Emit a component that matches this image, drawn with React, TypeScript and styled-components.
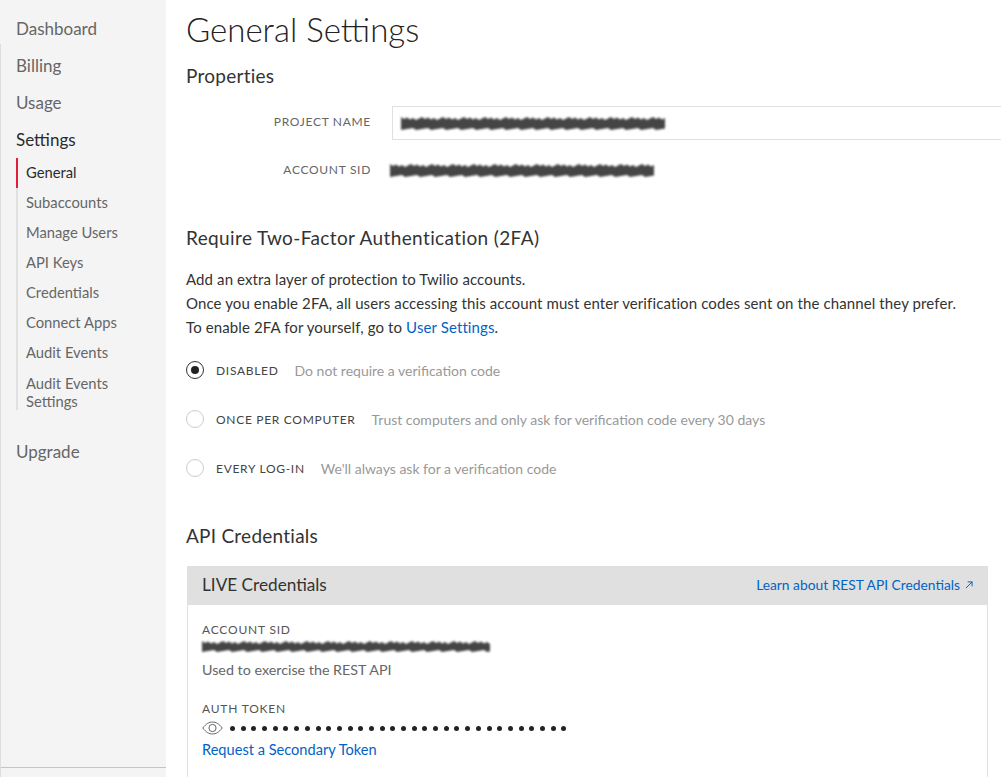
import React from 'react';
import styled, { createGlobalStyle } from 'styled-components';

const GlobalStyle = createGlobalStyle`
  html, body {
    margin: 0;
    height: 100%;
    overflow: hidden;
    background: #fff;
  }
  body {
    font-family: Lato, "Open Sans", sans-serif;
    color: #3a3a3a;
  }
`;

const navItems = ['Dashboard', 'Billing', 'Usage'];
const subItems = ['General', 'Subaccounts', 'Manage Users', 'API Keys', 'Credentials', 'Connect Apps', 'Audit Events'];

const radios = [
  { label: 'Disabled', hint: 'Do not require a verification code', checked: true },
  { label: 'Once per computer', hint: 'Trust computers and only ask for verification code every 30 days', checked: false },
  { label: 'Every log-in', hint: "We'll always ask for a verification code", checked: false },
];

// jagged blot used for the blacked out values
const Scribble = ({ width, height = 15 }: { width: number; height?: number }) => {
  let top = '';
  let bottom = '';
  for (let x = 0; x <= width; x += 3) {
    const a = 1 + ((x * 13) % 7) / 2;
    const b = height - 1 - ((x * 17) % 5) / 2;
    top += `L${x} ${a} `;
    bottom = `L${x} ${b} ` + bottom;
  }
  return (
    <ScribbleSvg width={width} height={height} viewBox={`0 0 ${width} ${height}`}>
      <path d={`M0 ${height / 2} ${top}${bottom}Z`} fill="#454545" />
    </ScribbleSvg>
  );
};

const App = () => (
  <Page>
    <GlobalStyle />
    <Sidebar>
      <Nav>
        {navItems.map((item) => (
          <NavItem key={item}>{item}</NavItem>
        ))}
        <NavItem $active>Settings</NavItem>
      </Nav>
      <SubNav>
        {subItems.map((item, i) => (
          <SubItem key={item} $active={i === 0}>
            {item}
          </SubItem>
        ))}
        <SubItem $wrap>
          Audit Events
          <br />
          Settings
        </SubItem>
      </SubNav>
      <Upgrade>Upgrade</Upgrade>
      <SidebarFooter />
    </Sidebar>

    <Main>
      <Title>General Settings</Title>
      <Heading>Properties</Heading>
      <FormRow>
        <FieldLabel>Project name</FieldLabel>
        <TextField>
          <Scribble width={266} />
        </TextField>
      </FormRow>
      <FormRow $plain>
        <FieldLabel $plain>Account SID</FieldLabel>
        <Scribble width={266} />
      </FormRow>

      <TwoFactorHeading>Require Two-Factor Authentication (2FA)</TwoFactorHeading>
      <Paragraph>
        Add an extra layer of protection to Twilio accounts.
        <br />
        Once you enable 2FA, all users accessing this account must enter verification codes sent on the channel they prefer.
        <br />
        To enable 2FA for yourself, go to <TextLink>User Settings</TextLink>.
      </Paragraph>

      <RadioList>
        {radios.map((r) => (
          <RadioRow key={r.label}>
            <RadioDot $checked={r.checked} />
            <RadioLabel>{r.label}</RadioLabel>
            <RadioHint>{r.hint}</RadioHint>
          </RadioRow>
        ))}
      </RadioList>

      <CredentialsHeading>API Credentials</CredentialsHeading>
      <Card>
        <CardHeader>
          <CardTitle>LIVE Credentials</CardTitle>
          <HeaderLink>
            Learn about REST API Credentials
            <svg width="8" height="8" viewBox="0 0 9 9" fill="none" stroke="#0263c4" strokeWidth="1.1">
              <path d="M1 8 8 1M3 1h5v5" />
            </svg>
          </HeaderLink>
        </CardHeader>
        <CardBody>
          <SmallLabel>Account SID</SmallLabel>
          <CardScribble>
            <Scribble width={288} height={13} />
          </CardScribble>
          <Hint>Used to exercise the REST API</Hint>
          <TokenLabel>Auth token</TokenLabel>
          <TokenRow>
            <svg width="21" height="14" viewBox="0 0 21 14" fill="none" stroke="#666" strokeWidth="1">
              <path d="M.8 7C4 2.8 7 1 10.5 1s6.5 1.8 9.7 6c-3.2 4.2-6.2 6-9.7 6S4 11.2.8 7Z" />
              <circle cx="10.5" cy="7" r="3.6" />
            </svg>
            <Dots>
              {Array.from({ length: 32 }).map((_, i) => (
                <Dot key={i} />
              ))}
            </Dots>
          </TokenRow>
          <SecondaryLink>Request a Secondary Token</SecondaryLink>
        </CardBody>
      </Card>
    </Main>
  </Page>
);

export default App;

const Page = styled.div`
  display: flex;
  height: 100vh;
  overflow: hidden;
`;

const Sidebar = styled.aside`
  position: relative;
  flex: 0 0 166px;
  box-sizing: border-box;
  padding-top: 10px;
  background: #f4f4f4;

  &::before {
    content: '';
    position: absolute;
    top: 44px;
    bottom: 0;
    left: 0;
    border-left: 1px solid #dedede;
  }
`;

const Nav = styled.nav`
  display: flex;
  flex-direction: column;
`;

const NavItem = styled.div<{ $active?: boolean }>`
  height: 37px;
  padding-left: 16px;
  font-size: 17px;
  line-height: 37px;
  color: ${({ $active }) => ($active ? '#2b2b2b' : '#666')};
`;

const SubNav = styled.div`
  display: flex;
  flex-direction: column;
  margin-left: 16px;
  border-left: 2px solid #e0e0e0;
`;

const SubItem = styled.div<{ $active?: boolean; $wrap?: boolean }>`
  box-sizing: border-box;
  height: ${({ $wrap }) => ($wrap ? 'auto' : '30px')};
  margin-left: -2px;
  padding: ${({ $wrap }) => ($wrap ? '6px 0 0 8px' : '0 0 0 8px')};
  border-left: 2px solid ${({ $active }) => ($active ? '#e31e3a' : 'transparent')};
  font-size: 14.75px;
  line-height: ${({ $wrap }) => ($wrap ? '18px' : '28px')};
  color: ${({ $active }) => ($active ? '#2b2b2b' : '#666')};
`;

const Upgrade = styled.div`
  margin-top: 30px;
  padding-left: 16px;
  font-size: 17px;
  line-height: 24px;
  color: #666;
`;

const SidebarFooter = styled.div`
  position: absolute;
  left: 1px;
  right: 0;
  bottom: 9px;
  border-top: 1px solid #c4c4c4;
`;

const Main = styled.main`
  flex: 1;
  min-width: 0;
  padding: 9px 0 0 20px;
`;

const Title = styled.h1`
  margin: 0;
  font-size: 33px;
  font-weight: 300;
  line-height: 40px;
  color: #222;
`;

const Heading = styled.h2`
  margin: 15px 0 0;
  font-size: 19px;
  font-weight: 400;
  letter-spacing: 0.25px;
  line-height: 24px;
  color: #333;
`;

const TwoFactorHeading = styled(Heading)`
  margin-top: 39px;
  letter-spacing: 0.38px;
`;

const CredentialsHeading = styled(Heading)`
  margin-top: 44px;
`;

const FormRow = styled.div<{ $plain?: boolean }>`
  display: flex;
  align-items: center;
  gap: ${({ $plain }) => ($plain ? '19px' : '21px')};
  height: 34px;
  margin-top: ${({ $plain }) => ($plain ? '13px' : '18px')};
`;

const FieldLabel = styled.label<{ $plain?: boolean }>`
  flex: 0 0 185px;
  padding-bottom: ${({ $plain }) => ($plain ? '1px' : '3px')};
  font-size: 12px;
  letter-spacing: 0.7px;
  text-align: right;
  text-transform: uppercase;
  color: #666;
`;

const TextField = styled.div`
  display: flex;
  align-items: center;
  flex: 1;
  height: 100%;
  box-sizing: border-box;
  margin-right: -4px;
  padding-left: 8px;
  border: 1px solid #e0e0e0;
`;

const ScribbleSvg = styled.svg`
  display: block;
  flex: none;
  filter: blur(0.8px);
`;

const Paragraph = styled.p`
  margin: 17px 0 0;
  font-size: 15px;
  letter-spacing: 0.11px;
  line-height: 24px;
  color: #333;
`;

const TextLink = styled.a`
  color: #0263c4;
`;

const RadioList = styled.div`
  display: flex;
  flex-direction: column;
  gap: 25px;
  margin-top: 19px;
`;

const RadioRow = styled.div`
  display: flex;
  align-items: center;
  height: 24px;
`;

const RadioDot = styled.span<{ $checked: boolean }>`
  flex: none;
  position: relative;
  box-sizing: border-box;
  width: 18px;
  height: 18px;
  margin-right: 12px;
  border-radius: 50%;
  border: 1px solid ${({ $checked }) => ($checked ? '#333' : '#ccc')};

  &::after {
    content: '';
    display: ${({ $checked }) => ($checked ? 'block' : 'none')};
    position: absolute;
    inset: 4px;
    border-radius: 50%;
    background: #222;
  }
`;

const RadioLabel = styled.span`
  margin-right: 16px;
  font-size: 12px;
  letter-spacing: 0.7px;
  text-transform: uppercase;
  color: #444;
`;

const RadioHint = styled.span`
  font-size: 14px;
  color: #999;
`;

const Card = styled.section`
  margin: 18px 13px 0 1px;
`;

const CardHeader = styled.header`
  display: flex;
  align-items: center;
  justify-content: space-between;
  box-sizing: border-box;
  height: 39px;
  padding: 0 15px 2px;
  background: #e0e0e0;
`;

const CardTitle = styled.span`
  font-size: 17.2px;
  color: #333;
`;

const HeaderLink = styled.a`
  display: flex;
  align-items: center;
  gap: 5px;
  font-size: 13.8px;
  color: #0263c4;
`;

const CardBody = styled.div`
  height: 300px;
  padding: 16px 14px 0;
  border: 1px solid #e0e0e0;
  border-top: 0;
`;

const SmallLabel = styled.div`
  font-size: 12px;
  line-height: 18px;
  letter-spacing: 0.8px;
  text-transform: uppercase;
  color: #555;
`;

const CardScribble = styled.div`
  margin-top: 1px;
`;

const TokenLabel = styled(SmallLabel)`
  margin-top: 20px;
`;

const Hint = styled.div`
  margin-top: 7px;
  font-size: 14.3px;
  line-height: 20px;
  color: #666;
`;

const TokenRow = styled.div`
  display: flex;
  align-items: center;
  gap: 7px;
  height: 20px;
`;

const Dots = styled.div`
  display: flex;
  gap: 5.7px;
`;

const Dot = styled.span`
  width: 5px;
  height: 5px;
  border-radius: 50%;
  background: #222;
`;

const SecondaryLink = styled.a`
  display: block;
  margin-top: 1px;
  font-size: 14.6px;
  line-height: 22px;
  color: #0263c4;
`;
